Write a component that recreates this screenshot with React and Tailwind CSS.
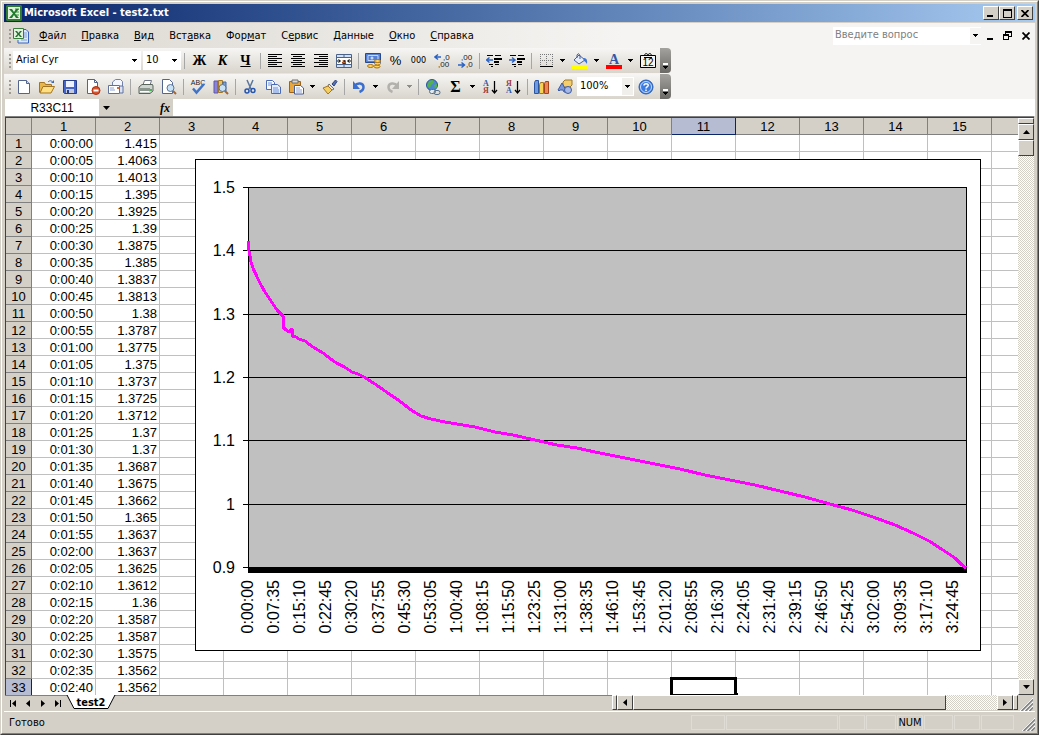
import React, { useState } from 'react';

const cellValues = [
  '1.415', '1.4063', '1.4013', '1.395', '1.3925', '1.39', '1.3875', '1.385', '1.3837', '1.3813', '1.38',
  '1.3787', '1.3775', '1.375', '1.3737', '1.3725', '1.3712', '1.37', '1.37', '1.3687', '1.3675', '1.3662',
  '1.365', '1.3637', '1.3637', '1.3625', '1.3612', '1.36', '1.3587', '1.3587', '1.3575', '1.3562', '1.3562',
];

const columns = Array.from({ length: 15 }, (_, i) => i + 1);

const formatTime = (seconds) => {
  const h = Math.floor(seconds / 3600);
  const m = String(Math.floor(seconds / 60) % 60).padStart(2, '0');
  const s = String(seconds % 60).padStart(2, '0');
  return `${h}:${m}:${s}`;
};

const menus = [
  ['', 'Ф', 'айл'],
  ['', 'П', 'равка'],
  ['', 'В', 'ид'],
  ['Вст', 'а', 'вка'],
  ['Фор', 'м', 'ат'],
  ['С', 'е', 'рвис'],
  ['', 'Д', 'анные'],
  ['', 'О', 'кно'],
  ['', 'С', 'правка'],
];

// discharge curve, in chart coordinates
const curve =
  '53,82 54,92 55,97 56,103 58,109 62,118 66,126 70,133 76,142 82,151 88,157 88,168 91,171 94,173 97,170 97,177 101,178 104,180 110,182 118,188 128,194 140,203 151,209 157,213 163,215 169,218 180,225 190,232 206,243 216,251 226,257 236,260 250,263 268,266 280,268 300,273 318,276 340,281 362,286 382,289 400,293 420,297 440,301 460,305 485,310 510,316 535,321 560,326 585,332 610,338 635,345 657,351 678,358 700,366 718,374 734,382 748,391 760,399 766,405 771,409';

const Icon = ({ children, size = 16 }) => (
  <svg width={size} height={size} viewBox="0 0 16 16" fill="none" aria-hidden="true" className="shrink-0">
    {children}
  </svg>
);

const ExcelIcon = () => (
  <Icon>
    <path d="M1 0h14l1 1v14l-1 1H1l-1-1V1z" fill="#2f7b33" />
    <path d="M2 2h12v12H2z" fill="#e4f0df" />
    <path d="M9 3h4v2H9zM10 6h3v2h-3zM10 9h3v2h-3z" fill="#8dc08a" />
    <path d="M3 4h3l2 3 2-3h3l-4 4.500 4 4.500h-3l-2-3-2 3H3l4-4.500z" fill="#1f7a2c" />
  </Icon>
);

const BookIcon = () => (
  <Icon>
    <path d="M9 1.500h4l2.500 2.500v11H5V12" fill="#dbe8fa" stroke="#3d65b5" />
    <path d="M11 5h3M11 7h3M11 9h3M8 12h6" stroke="#7fa0d8" />
    <path d="M.5.500h10v10H.5z" fill="#e3f1df" stroke="#397d3b" />
    <path d="M2 3h2l1.500 2L7 3h2L6.500 6 9 9H7L5.500 7 4 9H2l2.500-3z" fill="#236f2d" />
  </Icon>
);

const NewIcon = () => (
  <Icon>
    <path d="M2.500 1.500h8l3 3v10h-11z" fill="#fff" stroke="#53658f" />
    <path d="M10.500 1.500v3h3" fill="#c6d3ec" stroke="#53658f" />
  </Icon>
);

const OpenIcon = () => (
  <Icon>
    <path d="M.5 13.500v-10h5l1 2h6v2" fill="#e9b64a" stroke="#a17426" />
    <path d="M1 14L4 7.500h11.500L12 14z" fill="#ffdf80" stroke="#a17426" />
    <path d="M9 3c2-2 4-1.500 5 1" stroke="#3969b7" />
    <path d="M12 4h3V1z" fill="#3969b7" />
  </Icon>
);

const SaveIcon = () => (
  <Icon>
    <path d="M1.500 1.500h13v13h-12l-1-1z" fill="#4565c8" stroke="#263e8c" />
    <path d="M4 2h8v6H4z" fill="#eef2ff" />
    <path d="M4 10h8v4H4z" fill="#c6cbdc" />
    <path d="M5 11h2v3H5z" fill="#263e8c" />
  </Icon>
);

const PermissionIcon = () => (
  <Icon>
    <path d="M2.500.5h7l3 3v11h-10z" fill="#fff" stroke="#53658f" />
    <path d="M9.500.5v3h3" stroke="#53658f" />
    <circle cx="11" cy="11.500" r="4" fill="#d9532c" stroke="#a63315" />
    <path d="M8.500 11.500h5" stroke="#fff" strokeWidth="2" />
  </Icon>
);

const MailIcon = () => (
  <Icon>
    <path d="M4.500 6V3l3-2.500h5l2 2V11" fill="#f4f7ff" stroke="#7382aa" />
    <path d="M.5 6.500h11v8H.5z" fill="#fff" stroke="#62719c" />
    <path d="M2 9h4M2 11h5" stroke="#8fa3d3" />
    <path d="M9 8h2v2H9z" fill="#d56d35" />
    <path d="M12 7h3v7h-3" fill="#dae3f6" stroke="#62719c" />
  </Icon>
);

const PrintIcon = () => (
  <Icon>
    <path d="M5 6l1.500-4.500h7L12 6z" fill="#fff" stroke="#6f7687" />
    <path d="M1 8l3-2.500h10.500L15 7v5l-3 2.500H1z" fill="#cfd5d0" stroke="#59645c" />
    <path d="M2 9h10v3H2z" fill="#8b978e" />
    <path d="M2 12.500h9" stroke="#fff" />
    <path d="M12 10h2v2h-2z" fill="#43b84f" />
  </Icon>
);

const Magnifier = () => (
  <>
    <circle cx="9.500" cy="9" r="3.500" fill="#c9e2f6" stroke="#5b7599" />
    <path d="M12 12l3 3" stroke="#a8652c" strokeWidth="2" />
  </>
);

const PreviewIcon = () => (
  <Icon>
    <path d="M1.500.5h7l3 3v11h-10z" fill="#fff" stroke="#53658f" />
    <Magnifier />
  </Icon>
);

const SpellIcon = () => (
  <Icon>
    <text x="8" y="6" fontSize="7" textAnchor="middle" fill="#222" fontFamily="Liberation Sans, sans-serif">ABC</text>
    <path d="M3 9.500l3.500 4L14 5" stroke="#3f74c9" strokeWidth="2.500" />
  </Icon>
);

const ResearchIcon = () => (
  <Icon>
    <path d="M1 2h4v12H1z" fill="#8b83d8" stroke="#5e57a9" />
    <path d="M5.500 1.500h4v12h-4z" fill="#eac15a" stroke="#a17426" />
    <path d="M10 3h3v9h-3z" fill="#7ba4dc" stroke="#44689e" />
    <Magnifier />
  </Icon>
);

const CutIcon = () => (
  <Icon>
    <path d="M5 1l4 9M11 1L7 10" stroke="#5b7599" strokeWidth="1.500" />
    <circle cx="5" cy="12" r="2" stroke="#2456b0" strokeWidth="1.500" />
    <circle cx="11" cy="11.500" r="2" stroke="#2456b0" strokeWidth="1.500" />
  </Icon>
);

const CopyIcon = () => (
  <Icon>
    <path d="M1.500 1.500h6l2 2v7h-8z" fill="#f5f8ff" stroke="#4a6bb5" />
    <path d="M6.500 5.500h6l3 2.500v6.500h-9z" fill="#e4edff" stroke="#4a6bb5" />
    <path d="M3 4h4M3 6h3M8 9h5M8 11h6M8 13h6" stroke="#6f93da" />
  </Icon>
);

const PasteIcon = () => (
  <Icon>
    <path d="M1.500 2.500h11v11h-11z" fill="#e8a73f" stroke="#9a6420" />
    <path d="M4 1h6v3H4z" fill="#d9d9d9" stroke="#6e6e6e" />
    <path d="M6.500 6.500h6l3 2.500v6h-9z" fill="#fff" stroke="#4a5f95" />
    <path d="M8 9h4M8 11h6M8 13h6" stroke="#8fa3d3" />
  </Icon>
);

const BrushIcon = () => (
  <Icon>
    <path d="M10 5l3.500-4L15 2.500 12 7z" fill="#5771b3" stroke="#2e4680" />
    <path d="M7 5l5 5-2 1-4-4z" fill="#e8e8e8" stroke="#6e6e6e" />
    <path d="M6 7l4 4-4 4-5-6z" fill="#f4cf63" stroke="#a17426" />
  </Icon>
);

const UndoIcon = ({ color }) => (
  <Icon>
    <path d="M3.500 7c3-4 9-3 9 1 0 2.500-1.500 4-4 5" stroke={color} strokeWidth="2.500" />
    <path d="M2 2v8h7z" fill={color} />
  </Icon>
);

const LinkIcon = () => (
  <Icon>
    <circle cx="7" cy="6" r="5.500" fill="#4b86d5" stroke="#26559b" />
    <path d="M4 2l4-1 1 3-3 2-1 3-3-2zM9 6l3-1v3l-2 2z" fill="#55b14d" />
    <rect x="4.500" y="10.500" width="6" height="4" rx="2" fill="#e4e9ef" stroke="#566f88" />
    <rect x="9" y="11.500" width="6" height="4" rx="2" stroke="#566f88" />
  </Icon>
);

const SortIcon = ({ top, bottom, topColor, bottomColor }) => (
  <Icon>
    <g fontSize="8" fontWeight="bold" fontFamily="Liberation Serif, serif">
      <text x="1" y="7" fill={topColor}>{top}</text>
      <text x="1" y="14" fill={bottomColor}>{bottom}</text>
    </g>
    <path d="M12.500 2v11M10 11l2.500 3 2.500-3" stroke="#000" strokeWidth="1.250" />
  </Icon>
);

const ChartIcon = () => (
  <Icon>
    <path d="M.5 3.500l1-2h3v13h-4z" fill="#6c9be4" stroke="#2b559e" />
    <path d="M5.500 5.500l1-2h3v11h-4z" fill="#f6d256" stroke="#a17426" />
    <path d="M10.500 4.500l1-2h3v12h-4z" fill="#ee874f" stroke="#a4431e" />
  </Icon>
);

const DrawingIcon = () => (
  <Icon>
    <path d="M6 3l2-2h7v5l-2 2H6z" fill="#f3ce6b" stroke="#9b772d" />
    <path d="M1 11l4-7 5 9H7L6 11H3l-1 1z" fill="#7898db" stroke="#3c5ba3" />
    <ellipse cx="11" cy="11" rx="3.500" ry="3.500" fill="#a7b9e6" stroke="#3c5ba3" />
  </Icon>
);

const HelpIcon = () => (
  <Icon>
    <circle cx="8" cy="8" r="7" fill="#3c7ce0" stroke="#2a5cae" />
    <circle cx="8" cy="8" r="5.500" stroke="#c3dcff" />
    <path d="M6 6.500C6 4 10.500 4 10.200 6.500 10 8 8 8 8 9.500M8 10.500v1.500" stroke="#fff" strokeWidth="1.500" />
  </Icon>
);

const AlignIcon = ({ short }) => (
  <Icon>
    <path d={`M1 1.500h14M${short} 3.500h9M1 5.500h14M${short} 7.500h9M1 9.500h14M${short} 11.500h9M1 13.500h14`} stroke="#000" />
  </Icon>
);

const MergeIcon = () => (
  <Icon>
    <path d="M.5 1.500h15v13H.5z" fill="#cfe0f8" stroke="#4a6289" />
    <path d="M1 4.500h14M1 11.500h14M8 2v2M8 12v2" stroke="#4a6289" />
    <path d="M1 5h14v6H1z" fill="#fff" />
    <path d="M1 8h3M12 8h3M2.500 6.500L4.500 8l-2 1.500M13.500 6.500L11.500 8l2 1.500" stroke="#000" />
    <text x="8" y="10.500" fontSize="8" fontWeight="bold" textAnchor="middle" fill="#000" fontFamily="Liberation Serif, serif">a</text>
  </Icon>
);

const CurrencyIcon = () => (
  <Icon>
    <path d="M.5.500h15v9H.5z" fill="#5681d3" stroke="#264a92" />
    <path d="M3 2.500h10v5H3z" stroke="#c6d8f8" />
    <circle cx="7" cy="5" r="1.500" fill="#c6d8f8" />
    <g fill="#ffd45c" stroke="#a86f15">
      <ellipse cx="12" cy="13.500" rx="3" ry="1.500" />
      <ellipse cx="12.500" cy="10.500" rx="3" ry="1.500" />
      <ellipse cx="12.500" cy="8" rx="3" ry="1.500" />
      <ellipse cx="5.500" cy="13" rx="3" ry="1.500" />
    </g>
  </Icon>
);

const DecimalIcon = ({ increase }) => (
  <Icon>
    <g fontSize="8" fill="#222" fontFamily="Liberation Sans, sans-serif">
      <text x={increase ? 9 : 4} y="7">{increase ? ',0' : ',00'}</text>
      <text x={increase ? 4 : 9} y="14">{increase ? ',00' : ',0'}</text>
    </g>
    <path d={increase ? 'M1 4h6M4 1.500L1 4l3 2.500' : 'M1 12h6M4.500 9.500l3 2.500-3 2.500'} stroke="#2b63c4" strokeWidth="1.500" />
  </Icon>
);

const IndentIcon = ({ increase }) => (
  <Icon>
    <path d="M1 2.500h6M9 2.500h6M3 11.500h4M9 11.500h4M5 13.500h2" stroke="#000" />
    <path d="M8 5h8v2H8zM8 8h5v2H8z" fill="#000" />
    <path d={increase ? 'M0 7h5M3 4.500L6 7 3 9.500' : 'M7 7H1M3.500 4.500L.5 7l3 2.500'} stroke="#2b63c4" strokeWidth="1.500" />
  </Icon>
);

const BordersIcon = () => (
  <Icon>
    <path d="M2.500 1v12M8.500 1v12M14.500 1v12M2 1.500h13M2 7.500h13" stroke="#777" strokeDasharray="1 1" />
    <path d="M2 13.500h13" stroke="#000" />
  </Icon>
);

const FillIcon = () => (
  <Icon>
    <path d="M2 7l5-5 6 5-6 4z" fill="#e6eefb" stroke="#4a5f95" />
    <path d="M5 5V2q2-3 3 1v3" stroke="#4a5f95" />
    <path d="M11 5q5-1 4 6-2-3-3-3z" fill="#3e75d2" />
    <path d="M0 12h16v4H0z" fill="#ff0" />
  </Icon>
);

const FontColorIcon = () => (
  <Icon>
    <text x="8" y="11" fontSize="14" fontWeight="bold" textAnchor="middle" fill="#3458a4" fontFamily="Liberation Serif, serif">A</text>
    <path d="M0 12h16v4H0z" fill="#f00" />
  </Icon>
);

const CalendarIcon = () => (
  <Icon>
    <path d="M.5 2.500h15v12H.5z" fill="#f5f4f2" stroke="#000" />
    <path d="M4 3C5 0 7 0 8 2 9 0 11 0 12 3M4 4.500h8" stroke="#000" />
    <text x="8" y="13" fontSize="10" textAnchor="middle" fill="#000" fontFamily="Liberation Sans, sans-serif">12</text>
  </Icon>
);

const Caret = ({ color = '#000' }) => (
  <svg width="5" height="3" viewBox="0 0 5 3" shapeRendering="crispEdges" aria-hidden="true">
    <path d="M0 0h5v1H4v1H3v1H2V2H1V1H0z" fill={color} />
  </svg>
);

const ToolButton = ({ label, children }) => (
  <button aria-label={label} className="flex h-[22px] w-[23px] shrink-0 items-center justify-center">
    {children}
  </button>
);

const DropButton = ({ label, color }) => (
  <button aria-label={label} className="flex h-[22px] w-[11px] shrink-0 items-center justify-center">
    <Caret color={color} />
  </button>
);

const Separator = ({ wide }) => (
  <div className={`flex shrink-0 justify-center ${wide ? 'w-[7px]' : 'w-[6px]'}`}>
    <div className="h-4 w-px bg-[#a6a6a6]" />
  </div>
);

const Grip = () => (
  <div className="flex w-2 shrink-0 flex-col items-end gap-0.5 pr-[1px]">
    {[0, 1, 2, 3].map((i) => (
      <div key={i} className="h-0.5 w-0.5 bg-[#9f9b93]" />
    ))}
  </div>
);

const Combo = ({ label, value, width, boxed }) => (
  <div className={`relative h-[19px] shrink-0 bg-white ${width}`}>
    <select aria-label={label} defaultValue={value} className="block h-[18px] w-full appearance-none bg-transparent pl-[3px] text-[11px] leading-[18px]">
      <option>{value}</option>
    </select>
    <span className={`pointer-events-none absolute inset-y-px right-px flex w-[11px] items-center justify-center ${boxed ? 'bg-[#f0efec]' : ''}`}>
      <Caret />
    </span>
  </div>
);

const BarEnd = () => (
  <button aria-label="Параметры панелей инструментов" className="ml-auto flex h-[25px] w-[11px] flex-col items-center justify-end gap-px rounded-r-sm bg-linear-to-b from-[#a4a29e] to-[#6c6a67] pb-[4px]">
    <span className="h-0.5 w-[5px] bg-white" />
    <Caret />
  </button>
);

const toolbarClass = 'flex h-[25px] w-[667px] max-w-full items-center rounded-r-sm bg-linear-to-b from-[#f7f6f4] to-[#d9d5cd]';
const raised = 'border border-t-white border-l-white border-r-[#404040] border-b-[#404040] bg-[#d4d0c8]';
const track = 'bg-[repeating-conic-gradient(#ffffff_0_25%,#d4d0c8_0_50%)] bg-size-[2px_2px]';

const TitleBar = () => (
  <div className="flex h-[18px] items-center bg-linear-to-r from-[#0a246a] to-[#a6caf0] pr-[2px] pl-[2px]">
    <ExcelIcon />
    <h1 className="ml-[2px] flex-1 text-[11px] font-bold text-white">Microsoft Excel - test2.txt</h1>
    <button aria-label="Свернуть" className={`flex h-[14px] w-4 items-end pb-[2px] pl-[3px] ${raised}`}>
      <span className="h-0.5 w-1.5 bg-black" />
    </button>
    <button aria-label="Развернуть" className={`flex h-[14px] w-4 items-center justify-center ${raised}`}>
      <span className="h-[9px] w-[9px] border border-t-2 border-black" />
    </button>
    <button aria-label="Закрыть" className={`ml-[2px] flex h-[14px] w-4 items-center justify-center ${raised}`}>
      <svg width="8" height="7" viewBox="0 0 8 7" aria-hidden="true">
        <path d="M.5 0l7 7M7.500 0l-7 7" stroke="#000" strokeWidth="1.750" />
      </svg>
    </button>
  </div>
);

const MenuBar = () => (
  <div className="flex h-[25px] items-center">
    <Grip />
    <span className="ml-[1px]">
      <BookIcon />
    </span>
    <nav className="flex gap-[15px] pl-[10px]">
      {menus.map(([before, key, after]) => (
        <button key={before + key + after} className="text-[11px] leading-4">
          {before}
          <u>{key}</u>
          {after}
        </button>
      ))}
    </nav>
    <div className="ml-auto flex h-[18px] w-[148px] items-center bg-white">
      <input aria-label="Введите вопрос" placeholder="Введите вопрос" className="w-full min-w-0 pl-[2px] text-[11px] outline-none placeholder:text-[#808080]" />
      <button aria-label="Список вопросов" className="flex h-4 w-[11px] shrink-0 items-center justify-center bg-[#f5f4f2]">
        <Caret />
      </button>
    </div>
    <button aria-label="Свернуть книгу" className="ml-1.5 flex h-3 w-4 items-end pb-0.5">
      <span className="h-0.5 w-1.5 bg-black" />
    </button>
    <button aria-label="Восстановить книгу" className="w-[19px]">
      <svg width="9" height="9" viewBox="0 0 9 9" fill="none" shapeRendering="crispEdges" aria-hidden="true">
        <path d="M2.500 3V.5h6v5H6M2 1.500h7M.5 3.500h5v5h-5zM0 4.500h6" stroke="#000" />
      </svg>
    </button>
    <button aria-label="Закрыть книгу" className="w-[13px]">
      <svg width="8" height="8" viewBox="0 0 8 8" aria-hidden="true">
        <path d="M.5.500l7 7M7.500.5l-7 7" stroke="#000" strokeWidth="1.750" />
      </svg>
    </button>
  </div>
);

const FormatBar = () => (
  <div className={toolbarClass}>
    <Grip />
    <Combo label="Шрифт" value="Arial Cyr" width="ml-px w-[128px]" />
    <Combo label="Размер шрифта" value="10" width="ml-0.5 w-[38px]" />
    <Separator wide />
    <ToolButton label="Полужирный"><b className="font-['Liberation_Serif',serif] text-[14px]">Ж</b></ToolButton>
    <ToolButton label="Курсив"><i className="font-['Liberation_Serif',serif] text-[14px] font-bold">К</i></ToolButton>
    <ToolButton label="Подчеркнутый"><u className="font-['Liberation_Serif',serif] text-[14px] font-bold">Ч</u></ToolButton>
    <Separator />
    <ToolButton label="По левому краю"><AlignIcon short="1" /></ToolButton>
    <ToolButton label="По центру"><AlignIcon short="3" /></ToolButton>
    <ToolButton label="По правому краю"><AlignIcon short="6" /></ToolButton>
    <ToolButton label="Объединить и поместить в центре"><MergeIcon /></ToolButton>
    <Separator />
    <ToolButton label="Денежный формат"><CurrencyIcon /></ToolButton>
    <ToolButton label="Процентный формат"><span className="font-['Liberation_Sans',sans-serif] text-[13px]">%</span></ToolButton>
    <ToolButton label="Формат с разделителями"><span className="text-[9px]">000</span></ToolButton>
    <ToolButton label="Увеличить разрядность"><DecimalIcon increase /></ToolButton>
    <ToolButton label="Уменьшить разрядность"><DecimalIcon /></ToolButton>
    <Separator />
    <ToolButton label="Уменьшить отступ"><IndentIcon /></ToolButton>
    <ToolButton label="Увеличить отступ"><IndentIcon increase /></ToolButton>
    <Separator />
    <ToolButton label="Границы"><BordersIcon /></ToolButton>
    <DropButton label="Выбор границ" />
    <ToolButton label="Цвет заливки"><FillIcon /></ToolButton>
    <DropButton label="Выбор цвета заливки" />
    <ToolButton label="Цвет шрифта"><FontColorIcon /></ToolButton>
    <DropButton label="Выбор цвета шрифта" />
    <ToolButton label="Календарь"><CalendarIcon /></ToolButton>
    <BarEnd />
  </div>
);

const StandardBar = () => (
  <div className={`mt-px ${toolbarClass}`}>
    <Grip />
    <ToolButton label="Создать"><NewIcon /></ToolButton>
    <ToolButton label="Открыть"><OpenIcon /></ToolButton>
    <ToolButton label="Сохранить"><SaveIcon /></ToolButton>
    <ToolButton label="Разрешения"><PermissionIcon /></ToolButton>
    <ToolButton label="Сообщение"><MailIcon /></ToolButton>
    <Separator wide />
    <ToolButton label="Печать"><PrintIcon /></ToolButton>
    <ToolButton label="Предварительный просмотр"><PreviewIcon /></ToolButton>
    <Separator />
    <ToolButton label="Орфография"><SpellIcon /></ToolButton>
    <ToolButton label="Справочные материалы"><ResearchIcon /></ToolButton>
    <Separator />
    <ToolButton label="Вырезать"><CutIcon /></ToolButton>
    <ToolButton label="Копировать"><CopyIcon /></ToolButton>
    <ToolButton label="Вставить"><PasteIcon /></ToolButton>
    <DropButton label="Параметры вставки" />
    <ToolButton label="Формат по образцу"><BrushIcon /></ToolButton>
    <Separator />
    <ToolButton label="Отменить"><UndoIcon color="#3b6fcf" /></ToolButton>
    <DropButton label="Список отмены" />
    <ToolButton label="Вернуть"><span className="-scale-x-100"><UndoIcon color="#b3b1ac" /></span></ToolButton>
    <DropButton label="Список возврата" color="#8f8d89" />
    <Separator />
    <ToolButton label="Гиперссылка"><LinkIcon /></ToolButton>
    <ToolButton label="Автосумма"><b className="font-['Liberation_Serif',serif] text-[16px]">Σ</b></ToolButton>
    <DropButton label="Список функций" />
    <ToolButton label="Сортировка по возрастанию"><SortIcon top="А" bottom="Я" topColor="#3458a4" bottomColor="#a03b3b" /></ToolButton>
    <ToolButton label="Сортировка по убыванию"><SortIcon top="Я" bottom="А" topColor="#a03b3b" bottomColor="#3458a4" /></ToolButton>
    <Separator />
    <ToolButton label="Мастер диаграмм"><ChartIcon /></ToolButton>
    <ToolButton label="Рисование"><DrawingIcon /></ToolButton>
    <Combo label="Масштаб" value="100%" width="ml-px w-[57px]" boxed />
    <ToolButton label="Справка"><HelpIcon /></ToolButton>
    <BarEnd />
  </div>
);

const FormulaBar = () => (
  <div className="flex h-[17px] bg-[#d4d0c8] pl-px">
    <input aria-label="Имя" defaultValue="R33C11" className="h-[17px] w-[94px] bg-white text-center font-['Liberation_Sans',sans-serif] text-[12px] outline-none" />
    <button aria-label="Список имен" className="flex w-[15px] items-center justify-center">
      <svg width="7" height="4" viewBox="0 0 7 4" aria-hidden="true">
        <path d="M0 0h7L3.500 4z" fill="#000" />
      </svg>
    </button>
    <button aria-label="Вставка функции" className="ml-auto w-4 font-['Liberation_Serif',serif] text-[12px] leading-4 font-bold italic">fx</button>
    <input aria-label="Строка формул" className="h-[17px] w-[calc(100%-168px)] bg-white outline-none" />
  </div>
);

const Chart = () => {
  const yLabels = ['1.5', '1.4', '1.3', '1.2', '1.1', '1', '0.9'];
  const xLabels = Array.from({ length: 28 }, (_, i) => formatTime(i * 455));
  const rowY = (i) => 28 + Math.round((i * 380) / 6);

  return (
    <svg width="786" height="492" viewBox="0 0 786 492" className="absolute top-[41px] left-[189px] font-['Liberation_Sans',sans-serif] text-[16px]">
      <g shapeRendering="crispEdges">
        <rect x="0.5" y="0.5" width="785" height="491" fill="#fff" stroke="#000" />
        <rect x="53.5" y="28.5" width="718" height="380" fill="#c0c0c0" stroke="#000" />
        {yLabels.map((label, i) => (
          <path key={label} d={`M48 ${rowY(i)}.5H772`} stroke="#000" />
        ))}
        <rect x="53" y="408" width="719" height="6" fill="#000" />
        <polyline points={curve} fill="none" stroke="#f0f" strokeWidth="3" strokeLinejoin="round" />
      </g>
      {yLabels.map((label, i) => (
        <text key={label} x="40" y={rowY(i) + 6} textAnchor="end">{label}</text>
      ))}
      {xLabels.map((label, i) => (
        <text key={label} transform={`translate(${58 + Math.round(i * 26.1)} 421) rotate(-90)`} textAnchor="end">{label}</text>
      ))}
    </svg>
  );
};

const Sheet = () => (
  <div className="relative min-w-0 flex-1 overflow-hidden border-l border-[#404040] bg-white">
    <table className="w-full min-w-[1012px] table-fixed border-separate border-spacing-0 font-['Liberation_Sans',sans-serif] text-[13px] leading-[15px]">
      <colgroup>
        <col className="w-[26px]" />
        {columns.map((c) => (
          <col key={c} className="w-[64px]" />
        ))}
        <col />
      </colgroup>
      <thead>
        <tr>
          <td className="h-[17px] border-r border-b border-[#808080] bg-[#d4d0c8] p-0" />
          {columns.map((c) => (
            <th
              key={c}
              scope="col"
              className={`h-[17px] border-r border-b p-0 pt-px text-center font-normal ${c === 11 ? 'border-[#0a246a] bg-[#b6bdd2]' : 'border-[#808080] bg-[#d4d0c8]'}`}
            >
              {c}
            </th>
          ))}
          <td className="border-b border-[#808080] bg-[#d4d0c8] p-0" />
        </tr>
      </thead>
      <tbody>
        {cellValues.map((value, r) => {
          const last = r === cellValues.length - 1;
          const edge = last ? 'h-4 border-r' : 'h-[17px] border-r border-b';
          return (
            <tr key={r}>
              <th scope="row" className={`${edge} p-0 pt-px text-center font-normal ${last ? 'border-[#0a246a] bg-[#b6bdd2]' : 'border-[#808080] bg-[#d4d0c8]'}`}>
                {r + 1}
              </th>
              {columns.map((c) => (
                <td key={c} className={`${edge} relative border-[#c0c0c0] p-0 pt-px pr-[2px] text-right`}>
                  {c === 1 && formatTime(r * 5)}
                  {c === 2 && value}
                  {last && c === 11 && (
                    <div className="absolute -top-0.5 -right-0.5 bottom-0 -left-0.5 border-3 border-b border-black">
                      <span className="absolute -right-1 -bottom-px h-0.5 w-1 bg-black" />
                    </div>
                  )}
                </td>
              ))}
              <td className={`p-0 ${last ? '' : 'border-b border-[#c0c0c0]'}`} />
            </tr>
          );
        })}
      </tbody>
    </table>
    <Chart />
  </div>
);

const arrows = {
  up: 'M0 4h7L3.500 0z',
  down: 'M0 0h7L3.500 4z',
  left: 'M4 0v7L0 3.500z',
  right: 'M0 0v7l4-3.500z',
};

const ScrollArrow = ({ dir, label }) => {
  const vertical = dir === 'up' || dir === 'down';
  return (
    <button aria-label={label} className={`flex w-4 shrink-0 items-center justify-center ${vertical ? 'h-4' : 'h-[15px]'} ${raised}`}>
      <svg width={vertical ? 7 : 4} height={vertical ? 4 : 7} aria-hidden="true">
        <path d={arrows[dir]} fill="#000" />
      </svg>
    </button>
  );
};

const VerticalScroll = () => (
  <div className="mr-px flex w-4 shrink-0 flex-col">
    <div className={`h-1.5 ${raised}`} />
    <ScrollArrow dir="up" label="Вверх" />
    <div className={`flex-1 ${track}`}>
      <div className={`h-4 ${raised}`} />
    </div>
    <ScrollArrow dir="down" label="Вниз" />
  </div>
);

const navIcons = [
  ['Первый лист', 'M1 0h1v7H1zM7 0v7L3 3.500z'],
  ['Предыдущий лист', 'M6 0v7L2 3.500z'],
  ['Следующий лист', 'M2 0v7l4-3.500z'],
  ['Последний лист', 'M1 0v7l4-3.500zM6 0h1v7H6z'],
];

const ResizeGrip = () => (
  <svg width="13" height="13" viewBox="0 0 13 13" aria-hidden="true" className="shrink-0">
    <path d="M0 13L13 0M4 13l9-9M8 13l5-5" stroke="#fff" />
    <path d="M1.500 13L13 1.500M5.500 13L13 5.500M9.500 13L13 9.500" stroke="#808080" strokeWidth="1.500" />
  </svg>
);

const BottomBar = () => {
  const [sheet, setSheet] = useState('test2');

  return (
    <div className="mx-px flex h-4">
      <div className="flex min-w-0 flex-1 border-t border-[#808080]">
        {navIcons.map(([label, d]) => (
          <button key={label} aria-label={label} className="flex w-[15px] shrink-0 items-center justify-center">
            <svg width="8" height="7" aria-hidden="true">
              <path d={d} fill="#000" />
            </svg>
          </button>
        ))}
        <div className="relative -mt-px h-[15px] w-[52px]">
          <svg width="52" height="15" viewBox="0 0 52 15" fill="none" aria-hidden="true" className="absolute inset-0">
            <path d="M2 0h48l-7 14H9z" fill="#fff" />
            <path d="M2 0l7 13.500h34L50 0" stroke="#000" />
          </svg>
          <button onClick={() => setSheet('test2')} aria-pressed={sheet === 'test2'} className="relative block h-[15px] w-full text-center text-[11px] leading-[15px] font-bold">
            test2
          </button>
        </div>
      </div>
      <div className="flex w-[41%] min-w-0">
        <div className={`h-[15px] w-[5px] ${raised}`} />
        <ScrollArrow dir="left" label="Влево" />
        <div className={`h-[15px] flex-1 ${track}`}>
          <div className={`h-[15px] w-[86%] ${raised}`} />
        </div>
        <ScrollArrow dir="right" label="Вправо" />
        <div className={`h-[15px] w-[5px] ${raised}`} />
        <div className="flex w-4 items-end justify-center">
          <ResizeGrip />
        </div>
      </div>
    </div>
  );
};

const statusBoxes = [
  ['w-[34px]', ''],
  ['w-[112px]', ''],
  ['w-[26px]', ''],
  ['w-[30px]', ''],
  ['w-[26px]', 'NUM'],
  ['w-[29px]', ''],
  ['w-[26px]', ''],
  ['w-[33px]', ''],
];

const StatusBar = () => (
  <footer className="flex h-5 items-end border-t border-white pl-[5px] text-[11px]">
    <span className="flex-1 leading-4">Готово</span>
    <div className="flex gap-px pb-px">
      {statusBoxes.map(([width, text], i) => (
        <div key={i} className={`flex h-[15px] items-center justify-center border border-[#dfdcd6] leading-3 ${width}`}>
          {text}
        </div>
      ))}
    </div>
    <div className="ml-2">
      <ResizeGrip />
    </div>
  </footer>
);

const App = () => {
  return (
    <div className="border border-t-[#d4d0c8] border-r-[#404040] border-b-[#404040] border-l-[#d4d0c8] bg-[#d4d0c8] font-['DejaVu_Sans_Condensed','DejaVu_Sans',sans-serif] text-black">
      <div className="border border-t-white border-r-[#808080] border-b-[#808080] border-l-white p-0.5">
        <TitleBar />
        <header className="mt-px bg-linear-to-r from-[#dcd8d1] to-[#f5f4f2] to-60%">
          <MenuBar />
          <FormatBar />
          <StandardBar />
        </header>
        <FormulaBar />
        <main>
          <div className="mx-px border-t border-[#808080]">
            <div className="border-t border-[#404040]" />
          </div>
          <div className="ml-px flex">
            <Sheet />
            <VerticalScroll />
          </div>
          <BottomBar />
        </main>
        <StatusBar />
      </div>
    </div>
  );
};

export default App;
